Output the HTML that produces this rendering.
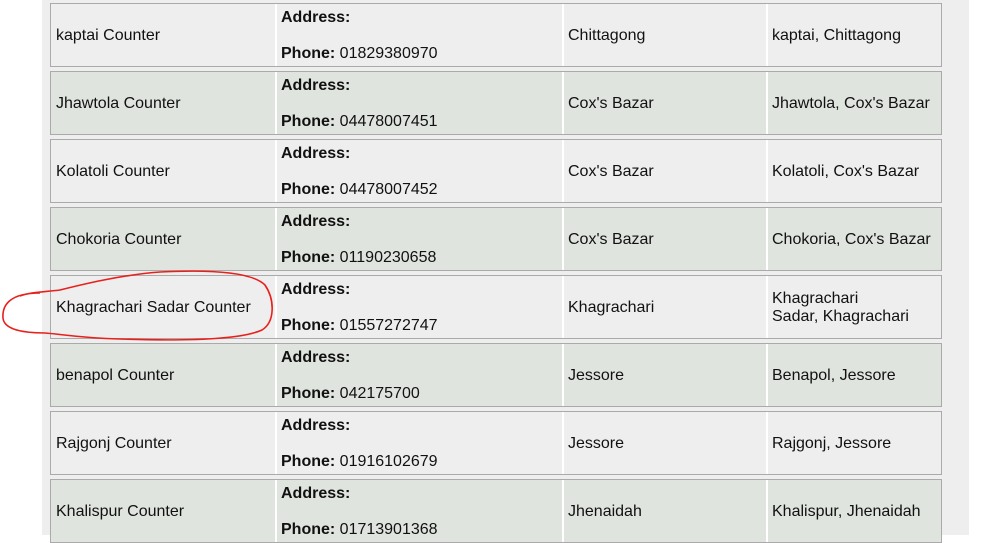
<!DOCTYPE html>
<html><head><meta charset="utf-8"><style>
body{margin:0;width:986px;height:535px;overflow:hidden;background:#fff;font-family:"Liberation Sans",Arial,sans-serif;font-size:16px;color:#111;position:relative}
.panel{position:absolute;left:42px;top:0;width:927px;height:535px;background:#eeeeee}
.row{position:absolute;left:50px;width:890px;height:62px;border:1px solid #aaa;background:#eeeeee}
.row.g{background:#e0e4df}
.sep{position:absolute;top:0;bottom:0;width:2px;background:#fff}
.t{position:absolute;white-space:nowrap;line-height:18px}
b{font-weight:bold}
</style></head><body>
<div class="panel"></div>
<div id="rows"></div>
<script>
var d=[["kaptai Counter","01829380970","Chittagong","kaptai, Chittagong"],
["Jhawtola Counter","04478007451","Cox's Bazar","Jhawtola, Cox's Bazar"],
["Kolatoli Counter","04478007452","Cox's Bazar","Kolatoli, Cox's Bazar"],
["Chokoria Counter","01190230658","Cox's Bazar","Chokoria, Cox's Bazar"],
["Khagrachari Sadar Counter","01557272747","Khagrachari","Khagrachari<br>Sadar, Khagrachari"],
["benapol Counter","042175700","Jessore","Benapol, Jessore"],
["Rajgonj Counter","01916102679","Jessore","Rajgonj, Jessore"],
["Khalispur Counter","01713901368","Jhenaidah","Khalispur, Jhenaidah"]];
var h="";
d.forEach(function(r,i){
var two=r[3].indexOf("<br>")>0;
h+='<div class="row'+(i%2?' g':'')+'" style="top:'+(3+68*i)+'px">'+
'<div class="sep" style="left:224px"></div><div class="sep" style="left:511px"></div><div class="sep" style="left:715px"></div>'+
'<div class="t" style="left:5px;top:23px">'+r[0]+'</div>'+
'<div class="t" style="left:230px;top:5px"><b>Address:</b></div>'+
'<div class="t" style="left:230px;top:41px"><b>Phone:</b> '+r[1]+'</div>'+
'<div class="t" style="left:517px;top:23px">'+r[2]+'</div>'+
'<div class="t" style="left:721px;top:'+(two?14:23)+'px">'+r[3]+'</div></div>';
});
document.getElementById("rows").innerHTML=h;
</script>
<svg style="position:absolute;left:0;top:0" width="986" height="535">
<path d="M40 293 C10 293 2 305 3 318 C4 330 25 333 45 333 C60 334 80 338 120 339 C180 341 240 340 262 330 C275 322 275 300 265 285 C250 270 200 270 160 272 C120 275 80 285 60 290 C45 292 30 292 20 296" fill="none" stroke="#e8201c" stroke-width="1.6"/>
</svg>
</body></html>
